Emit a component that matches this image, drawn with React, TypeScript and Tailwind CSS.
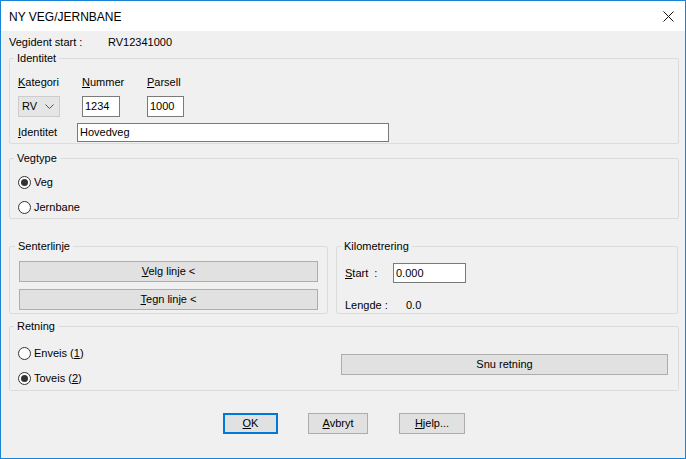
import React from 'react';

const font = { fontFamily: '"Liberation Sans", Arial, sans-serif' };

const Group = ({
  title,
  className,
  children,
}: {
  title: string;
  className?: string;
  children?: React.ReactNode;
}) => (
  <fieldset className={`border border-[#dcdcdc] rounded-[2px] px-[8px] ${className ?? ''}`}>
    <legend className="-ml-[4px] px-[3px] h-[13px] leading-[13px] text-[11px] text-black">{title}</legend>
    {children}
  </fieldset>
);

const Radio = ({ checked, label }: { checked?: boolean; label: React.ReactNode }) => (
  <div className="flex items-center h-[13px] gap-[3px]">
    <span className="w-[13px] h-[13px] rounded-full border border-[#333] bg-white flex items-center justify-center">
      {checked && <span className="w-[7px] h-[7px] rounded-full bg-[#333]" />}
    </span>
    <span className="leading-[13px]">{label}</span>
  </div>
);

const WinButton = ({ className, children }: { className?: string; children: React.ReactNode }) => (
  <button
    className={`h-[21px] bg-[#e1e1e1] border border-[#adadad] text-[11px] leading-[19px] text-black flex items-center justify-center ${className ?? ''}`}
  >
    {children}
  </button>
);

const Text = ({ className, children }: { className?: string; children: React.ReactNode }) => (
  <div className={`bg-white border border-[#7a7a7a] pl-[2px] leading-[17px] ${className ?? ''}`}>{children}</div>
);

export default function App() {
  return (
    <div
      className="w-[686px] h-[459px] border border-[#1883d7] bg-[#f0f0f0] flex flex-col text-[11px] text-black overflow-hidden"
      style={font}
    >
      {/* title bar */}
      <div className="h-[30px] bg-white flex items-center justify-between pl-[8px] pr-[11px] shrink-0">
        <span className="text-[12px] pt-[1px]">NY VEG/JERNBANE</span>
        <svg width="11" height="11" viewBox="0 0 11 11" className="mt-[1px]">
          <path d="M0.5 0.5 L10.5 10.5 M10.5 0.5 L0.5 10.5" stroke="#111" strokeWidth="1" />
        </svg>
      </div>

      <div className="pl-[8px] pr-[6px] flex flex-col">
        <div className="flex h-[13px] leading-[13px] mt-[5px]">
          <span className="w-[99px]">Vegident start :</span>
          <span>RV12341000</span>
        </div>

        {/* Identitet */}
        <Group title="Identitet" className="mt-[3px] h-[92px]">
          <div className="flex h-[13px] leading-[13px] mt-[11px]">
            <span className="w-[64px]"><u>K</u>ategori</span>
            <span className="w-[65px]"><u>N</u>ummer</span>
            <span><u>P</u>arsell</span>
          </div>
          <div className="flex mt-[7px] h-[21px]">
            <div className="w-[64px]">
              <div className="w-[42px] h-[21px] bg-[#e5e5e5] border border-[#cccccc] flex items-center justify-between pl-[3px] pr-[5px]">
                <span>RV</span>
                <svg width="9" height="5" viewBox="0 0 9 5">
                  <path d="M0.5 0.5 L4.5 4.5 L8.5 0.5" fill="none" stroke="#555" strokeWidth="1" />
                </svg>
              </div>
            </div>
            <div className="w-[65px]">
              <Text className="w-[38px] h-[21px] leading-[19px]">1234</Text>
            </div>
            <Text className="w-[37px] h-[21px] leading-[19px]">1000</Text>
          </div>
          <div className="flex items-center mt-[6px] h-[19px]">
            <span className="w-[59px]"><u>I</u>dentitet</span>
            <Text className="w-[312px] h-[19px]">Hovedveg</Text>
          </div>
        </Group>

        {/* Vegtype */}
        <Group title="Vegtype" className="mt-[8px] h-[67px]">
          <div className="mt-[11px] flex flex-col gap-[12px]">
            <Radio checked label="Veg" />
            <Radio label="Jernbane" />
          </div>
        </Group>

        <div className="flex mt-[21px] gap-[8px]">
          {/* Senterlinje */}
          <Group title="Senterlinje" className="w-[319px] h-[74px] !pl-[9px] !pr-[9px]">
            <div className="mt-[8px] flex flex-col gap-[7px]">
              <WinButton className="w-full">
                <span><u>V</u>elg linje &lt;</span>
              </WinButton>
              <WinButton className="w-full">
                <span><u>T</u>egn linje &lt;</span>
              </WinButton>
            </div>
          </Group>

          {/* Kilometrering */}
          <Group title="Kilometrering" className="w-[342px] h-[74px]">
            <div className="flex items-center mt-[10px] h-[20px]">
              <span className="w-[48px]"><u>S</u>tart&nbsp;&nbsp;:</span>
              <Text className="w-[73px] h-[20px] leading-[18px]">0.000</Text>
            </div>
            <div className="flex h-[13px] leading-[13px] mt-[16px]">
              <span className="w-[61px]">Lengde :</span>
              <span>0.0</span>
            </div>
          </Group>
        </div>

        {/* Retning */}
        <Group title="Retning" className="mt-[6px] h-[71px]">
          <div className="flex">
            <div className="mt-[14px] flex flex-col gap-[12px] w-[323px]">
              <Radio label={<>Enveis (<u>1</u>)</>} />
              <Radio checked label={<>Toveis (<u>2</u>)</>} />
            </div>
            <WinButton className="mt-[21px] w-[327px]">Snu retning</WinButton>
          </div>
        </Group>

        <div className="flex mt-[22px] pl-[214px]">
          <WinButton className="w-[55px] !border-2 !border-[#0078d7]">
            <span><u>O</u>K</span>
          </WinButton>
          <WinButton className="w-[60px] ml-[30px]">
            <span><u>A</u>vbryt</span>
          </WinButton>
          <WinButton className="w-[66px] ml-[31px]">
            <span><u>H</u>jelp...</span>
          </WinButton>
        </div>
      </div>
    </div>
  );
}
